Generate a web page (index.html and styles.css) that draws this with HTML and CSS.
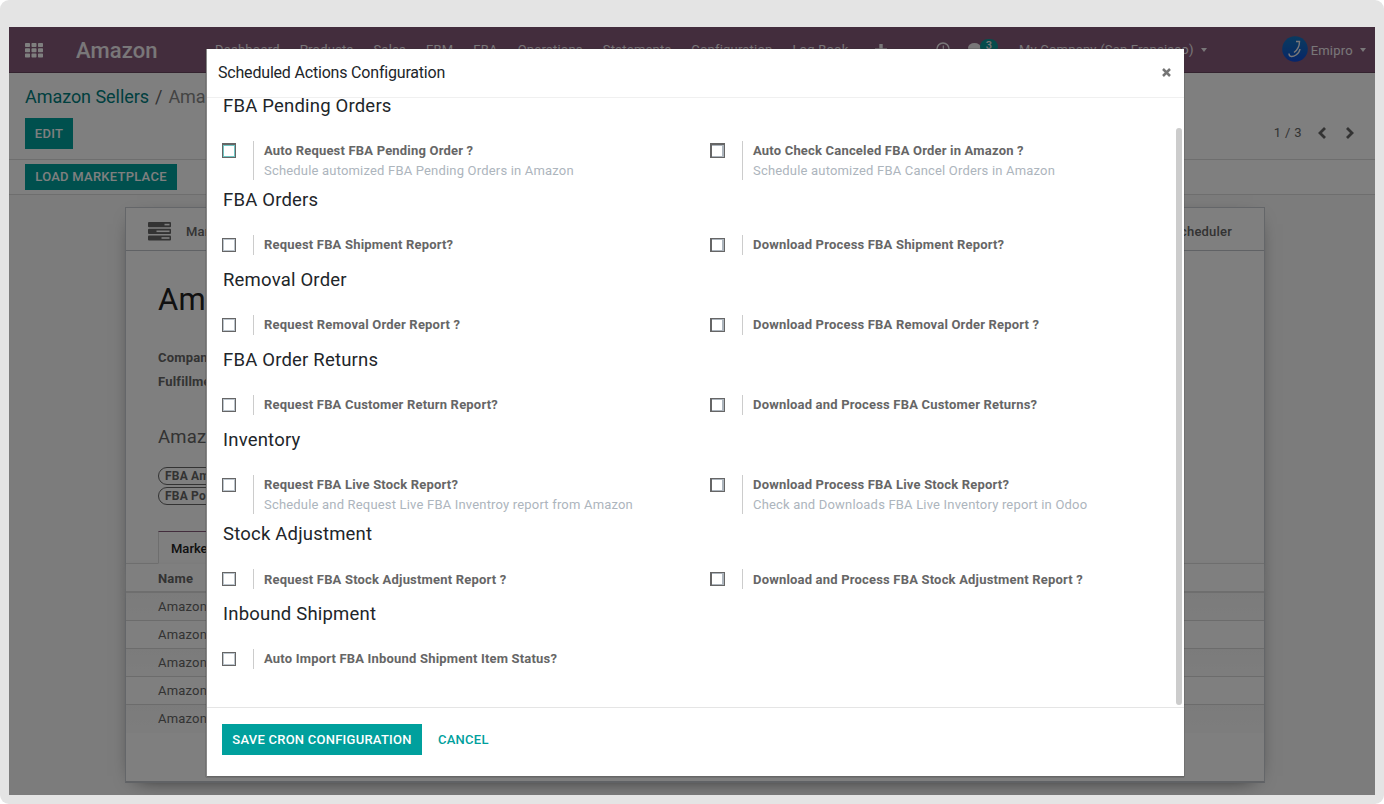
FILE: index.html
```html
<!DOCTYPE html>
<html lang="en">
<head>
<meta charset="utf-8">
<title>Scheduled Actions Configuration</title>
<link rel="stylesheet" href="styles.css">
</head>
<body>
<div class="frame">
<div class="screen">
  <header class="navbar">
    <svg class="apps" width="18" height="15" viewBox="0 0 18 15"><g fill="#fff"><rect width="5" height="4" rx=".7"/><rect x="6.5" width="5" height="4" rx=".7"/><rect x="13" width="5" height="4" rx=".7"/><rect y="5.2" width="5" height="4" rx=".7"/><rect x="6.5" y="5.2" width="5" height="4" rx=".7"/><rect x="13" y="5.2" width="5" height="4" rx=".7"/><rect y="10.4" width="5" height="4" rx=".7"/><rect x="6.5" y="10.4" width="5" height="4" rx=".7"/><rect x="13" y="10.4" width="5" height="4" rx=".7"/></g></svg>
    <span class="brand">Amazon</span>
    <nav class="menu"><a>Dashboard</a><a>Products</a><a>Sales</a><a>FBM</a><a>FBA</a><a>Operations</a><a>Statements</a><a>Configuration</a><a>Log Book</a><svg width="12" height="12" viewBox="0 0 12 12"><path d="M4.3 0h3.4v4.3H12v3.4H7.7V12H4.3V7.7H0V4.3h4.3z" fill="#fff"/></svg></nav>
    <div class="tray">
      <svg class="clock" width="14" height="14" viewBox="0 0 14 14"><circle cx="7" cy="7" r="6" fill="none" stroke="#fff" stroke-width="1.600"/><path d="M7.3 3.5V7.8H4.8" fill="none" stroke="#fff" stroke-width="1.2"/></svg>
      <span class="chat"><svg width="16" height="14" viewBox="0 0 16 14"><ellipse cx="6.5" cy="5" rx="6.5" ry="5" fill="#fff"/><path d="M2 8L1 12l4-2z" fill="#fff"/></svg><b>3</b></span>
      <span class="company">My Company (San Francisco)</span><i class="caret"></i>
      <svg class="avatar" width="26" height="26" viewBox="0 0 26 26"><defs><linearGradient id="av" x1="0" y1="0" x2="0" y2="1"><stop offset="0" stop-color="#0878c8"/><stop offset=".6" stop-color="#0560d0"/><stop offset="1" stop-color="#0048e0"/></linearGradient></defs><circle cx="13" cy="13" r="12.8" fill="url(#av)"/><path d="M14 5.500H17.500C17.500 10 15.500 14 12 16.500M7 17.500C7 21.500 11 21 14 19S17.500 16 18 13" fill="none" stroke="#fff" stroke-width="1.400"/></svg>
      <span class="user">Emipro</span><i class="caret"></i>
    </div>
  </header>
  <div class="control">
    <div class="crumbs"><a>Amazon Sellers</a><span class="sep">/</span><span class="cur">Amaz</span></div>
    <div class="control-row"><button class="btn edit">Edit</button>
      <div class="pager"><span>1 / 3</span><svg width="10" height="12" viewBox="0 0 10 12"><path d="M8 1L3 6l5 5" fill="none" stroke="#666" stroke-width="2.8"/></svg><svg width="10" height="12" viewBox="0 0 10 12"><path d="M2 1l5 5-5 5" fill="none" stroke="#666" stroke-width="2.8"/></svg></div></div>
  </div>
  <div class="status"><button class="btn load">Load Marketplace</button></div>
  <main class="content">
    <div class="sheet">
      <div class="stats"><svg width="23" height="19" viewBox="0 0 23 19"><g fill="#666"><rect width="23" height="5.200" rx="1"/><rect y="6.700" width="23" height="5.200" rx="1"/><rect y="13.400" width="23" height="5.200" rx="1"/></g><g fill="#fff"><rect x="16.500" y="1.800" width="5" height="1.600"/><rect x="8.500" y="8.500" width="13" height="1.600"/><rect x="13.500" y="15.200" width="8" height="1.600"/></g></svg><b>Mark</b><b class="last">Scheduler</b></div>
      <div class="record">
        <h1>Ama</h1>
        <p class="field">Company</p>
        <p class="field">Fulfillment</p>
        <h2 class="group">Amazon</h2>
        <div class="tags"><span>FBA Amaz</span><span>FBA Pool</span></div>
      </div>
      <div class="tabs"><span>Market</span></div>
      <div class="list"><div class="th">Name</div><div class="td">Amazon</div><div class="td">Amazon</div><div class="td">Amazon</div><div class="td">Amazon</div><div class="td">Amazon</div></div>
    </div>
  </main>
  <div class="backdrop"></div>
  <section class="modal">
    <header class="modal-head"><span>Scheduled Actions Configuration</span><svg width="9" height="9" viewBox="0 0 9 9"><path d="M1 1l7 7M8 1L1 8" stroke="#757575" stroke-width="2.500"/></svg></header>
    <div class="modal-body">
      <div class="sections">
        <h2>FBA Pending Orders</h2>
        <div class="row tall first"><div class="opt"><i class="box focus"></i><div><b>Auto Request FBA Pending Order ?</b><p>Schedule automized FBA Pending Orders in Amazon</p></div></div><div class="opt"><i class="box"></i><div><b>Auto Check Canceled FBA Order in Amazon ?</b><p>Schedule automized FBA Cancel Orders in Amazon</p></div></div></div>
        <h2>FBA Orders</h2>
        <div class="row"><div class="opt"><i class="box"></i><div><b>Request FBA Shipment Report?</b></div></div><div class="opt"><i class="box"></i><div><b>Download Process FBA Shipment Report?</b></div></div></div>
        <h2>Removal Order</h2>
        <div class="row"><div class="opt"><i class="box"></i><div><b>Request Removal Order Report ?</b></div></div><div class="opt"><i class="box"></i><div><b>Download Process FBA Removal Order Report ?</b></div></div></div>
        <h2>FBA Order Returns</h2>
        <div class="row"><div class="opt"><i class="box"></i><div><b>Request FBA Customer Return Report?</b></div></div><div class="opt"><i class="box"></i><div><b>Download and Process FBA Customer Returns?</b></div></div></div>
        <h2>Inventory</h2>
        <div class="row tall"><div class="opt"><i class="box"></i><div><b>Request FBA Live Stock Report?</b><p>Schedule and Request Live FBA Inventroy report from Amazon</p></div></div><div class="opt"><i class="box"></i><div><b>Download Process FBA Live Stock Report?</b><p>Check and Downloads FBA Live Inventory report in Odoo</p></div></div></div>
        <h2>Stock Adjustment</h2>
        <div class="row low"><div class="opt"><i class="box"></i><div><b>Request FBA Stock Adjustment Report ?</b></div></div><div class="opt"><i class="box"></i><div><b>Download and Process FBA Stock Adjustment Report ?</b></div></div></div>
        <h2>Inbound Shipment</h2>
        <div class="row"><div class="opt"><i class="box"></i><div><b>Auto Import FBA Inbound Shipment Item Status?</b></div></div></div>
      </div>
      <div class="scrollbar"></div>
    </div>
    <footer class="modal-foot"><button class="btn save">Save Cron Configuration</button><button class="btn cancel">Cancel</button></footer>
  </section>
</div>
</div>
</body>
</html>
```
FILE: styles.css
```css
* { box-sizing: border-box; }
body { margin: 0; background: #fff; font: 13px/20px Roboto, sans-serif; color: #666; letter-spacing: .2px; }
h1, h2, p { margin: 0; font-weight: 400; }
.frame { width: 1384px; height: 804px; padding: 27px 9px 9px; background: #e4e4e4; border-radius: 9px; }
.screen { position: relative; height: 768px; overflow: hidden; background: #f8f8f8; display: flex; flex-direction: column; }
.navbar { height: 46px; flex: none; background: #875a7b; border-bottom: 1px solid #68465f; display: flex; align-items: center; color: #fff; white-space: nowrap; padding-top: 2px; }
.apps { margin-left: 16px; margin-top: -1px; }
.brand { font-size: 22px; font-weight: 500; margin-left: 33px; width: 139px; letter-spacing: .1px; opacity: .9; }
.menu { display: flex; align-items: center; gap: 20px; width: 722px; opacity: .9; flex: none; margin-top: -2px; }
.menu svg { margin-left: 7px; }
.tray { display: flex; align-items: center; opacity: .9; }
.clock { margin-left: -1px; margin-top: -3px; }
.chat { display: flex; margin-left: 18px; width: 32px; margin-right: 19px; margin-top: -3px; }
.chat svg { margin-top: 2px; }
.chat b { background: #00a09d; border-radius: 8px; width: 18px; height: 16px; margin-left: -4px; margin-top: -2px; font: 500 11px/14px Roboto, sans-serif; text-align: center; }
.company { margin-top: -2px; }
.caret { border: 3.5px solid transparent; border-top: 4px solid #fff; border-bottom: 0; margin-left: 7px; margin-top: -2px; }
.avatar { margin-left: 75px; margin-right: 3px; margin-top: -3px; }
.control { height: 87px; flex: none; background: #fff; border-bottom: 1px solid #ddd; padding: 12px 20px 0 16px; }
.crumbs { font-size: 18px; line-height: 24px; display: flex; letter-spacing: -.05px; }
.crumbs a { color: #00807e; }
.crumbs .sep { margin: 0 6px; }
.crumbs .cur { color: #888; }
.control-row { display: flex; justify-content: space-between; align-items: center; margin-top: 9px; }
.btn { border: 0; padding: 0; background: #00a09d; color: #fff; font: 500 13px/31px Roboto, sans-serif; text-transform: uppercase; letter-spacing: .25px; height: 31px; }
.edit { width: 48px; }
.pager { display: flex; align-items: center; gap: 18px; padding-bottom: 2px; }
.pager span { letter-spacing: .35px; margin-right: -3px; padding-top: 1px; }
.status { height: 35px; flex: none; background: #fff; border-bottom: 1px solid #ddd; padding: 4px 16px; }
.load { width: 152px; height: 26px; line-height: 26px; display: block; }
.content { padding: 12px 110px 0 116px; }
.sheet { height: 576px; background: #fff; border: 1px solid #c8cdd2; border-bottom: 2px solid #c0c5ca; box-shadow: 0 5px 20px -12px #000; display: flex; flex-direction: column; }
.stats { height: 43px; border-bottom: 1px solid #c0c5ca; display: flex; align-items: center; padding: 5px 32px 0 22px; flex: none; }
.stats b { margin-left: 15px; font-weight: 500; }
.stats svg { margin-top: -1px; }
.stats .last { margin-left: auto; }
.record { padding: 31px 32px 0; height: 280px; }
h1 { font-size: 31px; line-height: 36px; color: #222; margin-bottom: 28px; }
.field { font-weight: 700; line-height: 24px; }
.group { font-size: 18.500px; line-height: 24px; margin: 31px 0 18px; }
.tags { display: flex; flex-direction: column; align-items: flex-start; gap: 2px; }
.tags span { border: 1px solid #666; border-radius: 9px; height: 18px; line-height: 16px; padding: 0 7px 0 6px; font-size: 12px; font-weight: 700; }
.tabs { border-bottom: 1px solid #ddd; padding-left: 32px; height: 33px; }
.tabs span { display: block; width: 112px; height: 33px; border: 1px solid #ddd; border-top-color: #875a7b; border-bottom-color: #fff; padding: 7px 12px; color: #222; font-weight: 500; letter-spacing: 0; }
.th { height: 29px; border-bottom: 2px solid #ddd; padding: 5px 32px; font-weight: 700; box-shadow: 0 3px 8px #ddd; }
.td { height: 28px; border-bottom: 1px solid #d8d8d8; padding: 4px 32px; }
.td:last-child { border: 0; }
.td:nth-child(even) { background: linear-gradient(#f7f7f7, #fbfbfb); }
.backdrop { position: absolute; inset: 0; background: rgba(0, 0, 0, .5); }
.modal { position: absolute; left: 197px; top: 22px; width: 978px; height: 728px; background: #fff; border-bottom: 1px solid #666; border-left: 1px solid #888; display: flex; flex-direction: column; box-shadow: 0 0 1px #333; }
.modal-head { height: 49px; flex: none; border-bottom: 1px solid #f0f0f0; display: flex; align-items: center; justify-content: space-between; padding: 0 13px 2px 11px; color: #212529; font-size: 16px; letter-spacing: -.19px; }
.modal-head span { padding-top: 2px; }
.modal-body { height: 609px; display: flex; justify-content: space-between; overflow: hidden; }
.sections { width: 950px; padding: 0 0 0 15px; margin-top: -4px; }
.sections h2 { font-size: 18.500px; line-height: 24px; height: 47px; padding-left: 1px; color: #212529; }
.row { display: grid; grid-template-columns: 489px 1fr; height: 33px; align-items: start; }
.row.tall { height: 47.200px; }
.row.tall .opt > div { height: 39px; }
.row.low b { padding-top: 1px; height: 20px; }
.opt { display: flex; }
.opt > div { border-left: 1px solid #ccc; padding-left: 10px; }
.opt b { display: block; font-weight: 700; letter-spacing: .19px; }
.opt p { color: #adb5bd; letter-spacing: .185px; }
.box { width: 14px; height: 14px; border: 1px solid #666; box-shadow: inset 0 0 0 1px #bcc5cd; margin: 3px 17px 0 0; flex: none; }
.box.focus { box-shadow: inset 0 0 0 1px #71c6c4; }
.opt + .opt .box { width: 15px; border-left-width: 2px; margin-left: -1px; box-shadow: inset -1px 0 0 1px #adb5bd; }
.row.first .box { height: 15px; border-top-width: 2px; margin-top: 2px; }
.scrollbar { width: 6px; height: 577px; background: #ccc; border-radius: 3px; margin: 30px 2px 0 0; }
.modal-foot { border-top: 1px solid #e5e5e5; flex: 1; padding: 16px 15px; display: flex; gap: 16px; }
.save { width: 200px; }
.cancel { background: none; color: #00a09d; }
```
